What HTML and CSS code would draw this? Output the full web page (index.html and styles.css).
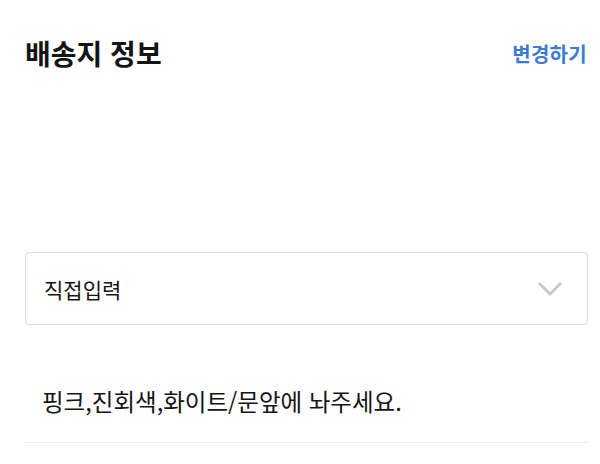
FILE: index.html
```html
<!DOCTYPE html>
<html lang="ko">
<head>
    <meta charset="UTF-8">
    <meta name="viewport" content="width=device-width, initial-scale=1.0">
    <title>배송지 정보</title>
    <link rel="stylesheet" href="styles.css">
</head>
<body>
    <div class="container">
        <!-- 제목 + 변경 링크 -->
        <div class="section-head">
            <h2>배송지 정보</h2>
            <a href="#" class="change-link">변경하기</a>
        </div>

        <!-- 배송 요청사항 선택 -->
        <div class="memo-select">
            <span>직접입력</span>
            <svg class="chevron" width="26" height="16" viewBox="0 0 26 16">
                <polyline points="2,2 13,13 24,2" fill="none" stroke="#c9c9c9" stroke-width="3" />
            </svg>
        </div>

        <!-- 직접입력 내용 -->
        <div class="memo-text">핑크,진회색,화이트/문앞에 놔주세요.</div>
    </div>
</body>
</html>
```

FILE: styles.css
```css
body {
    margin: 0;
    background: #fff;
    color: #141414;
    font-family: "Noto Sans CJK KR", "Noto Sans", sans-serif;
}

.container {
    padding: 34px 12px 0 25px;
}

.section-head {
    display: flex;
    justify-content: space-between;
    align-items: center;
    height: 38px;
}

.section-head h2 {
    margin: 0;
    font-size: 28px;
    font-weight: 700;
}

.change-link {
    color: #3b7bd4;
    font-size: 20px;
    font-weight: 700;
    text-decoration: none;
    margin-right: 1px;
    letter-spacing: 0.3px;
}

.memo-select {
    margin-top: 180px;
    height: 73px;
    box-sizing: border-box;
    border: 1px solid #dcdcdc;
    border-radius: 4px;
    display: flex;
    align-items: center;
    justify-content: space-between;
    padding: 0 24px 0 18px;
    font-size: 21px;
}

.chevron {
    display: block;
}

.memo-text {
    margin-top: 61px;
    padding: 0 0 26px 17px;
    line-height: 30px;
    font-size: 23.5px;
    border-bottom: 1px solid #ececec;
}
```
